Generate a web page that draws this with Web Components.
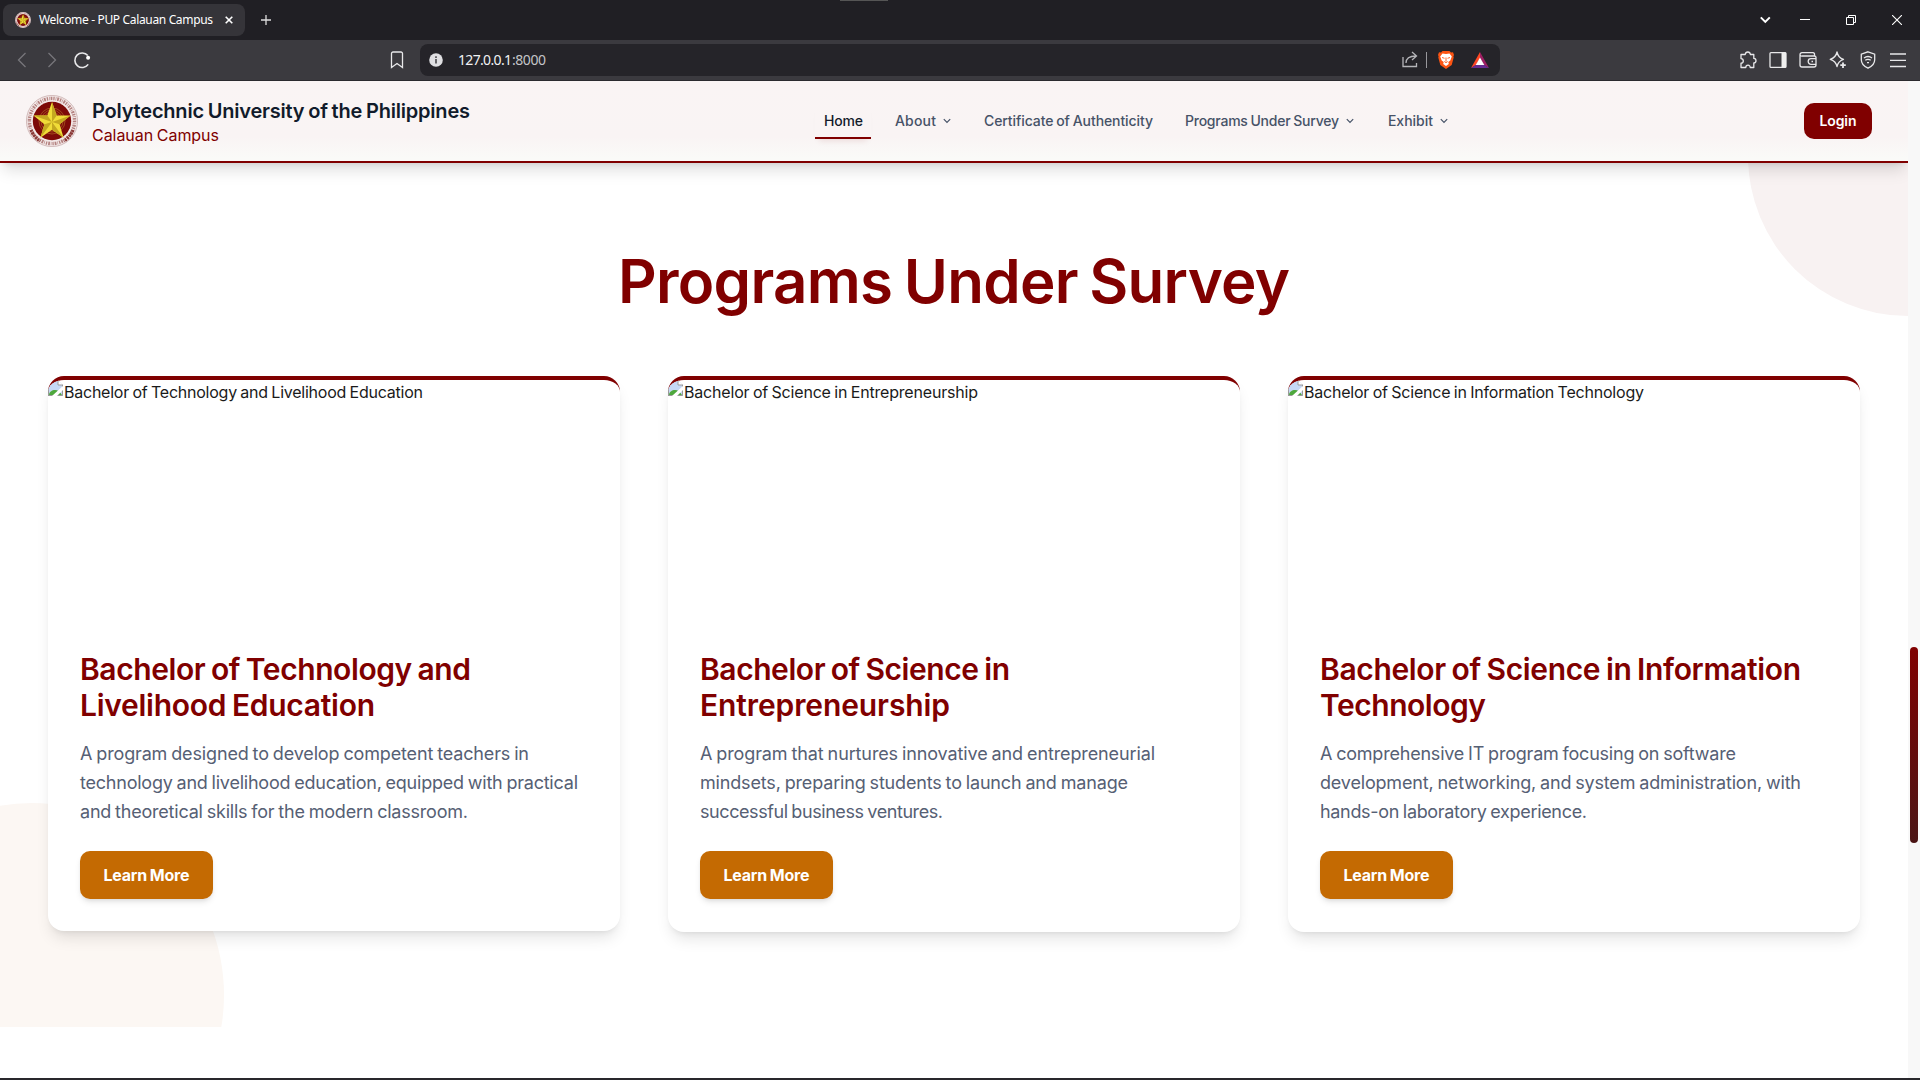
<!DOCTYPE html>
<html lang="en">
<head>
<meta charset="utf-8">
<title>Welcome - PUP Calauan Campus</title>
<style>
html,body{margin:0;height:100%;overflow:hidden;background:#fff}
body{font-family:Inter,"Liberation Sans",sans-serif}
</style>
</head>
<body>
<app-window></app-window>
<script>
const define=(name,html,init)=>{
  const t=document.createElement('template');t.innerHTML=html;
  customElements.define(name,class extends HTMLElement{
    connectedCallback(){
      if(this.shadowRoot)return;
      this.attachShadow({mode:'open'}).append(t.content.cloneNode(true));
      if(init)init.call(this,this.shadowRoot);
    }
  });
};

/* A single line of text, tracked so that it fills the width in "w". */
define('fit-line',`<style>:host{display:block;white-space:nowrap}span{display:inline-block;word-spacing:var(--word,-.05em)}</style><span><slot></slot></span>`,
function(root){
  const s=root.querySelector('span'),n=this.textContent.length,w=+this.getAttribute('w');
  s.style.letterSpacing='0px';
  const natural=s.getBoundingClientRect().width;
  const ls=(w-natural)/(n-1);
  s.style.letterSpacing=ls.toFixed(4)+'px';
  s.style.marginRight=(-ls).toFixed(4)+'px';
});

define('pup-seal',`<style>:host{display:block}svg{display:block;width:100%;height:100%}</style>
<svg viewBox="0 0 52 52"><circle cx="26" cy="26" r="25.600" fill="#f3e9e8" stroke="#b99" stroke-width=".6"/>
<circle cx="26" cy="26" r="22.600" fill="none" stroke="#b58482" stroke-width="3.400" stroke-dasharray="1.300 1.100 .6 .9 1.800 1"/>
<path d="M5 35a23 23 0 0 0 9 11M47 35a23 23 0 0 1-9 11" fill="none" stroke="#8b3a38" stroke-width="3.200" stroke-dasharray="2 .8"/>
<circle cx="26" cy="26" r="19.200" fill="#7d0a08"/>
<g fill="none" stroke="#b5722c" stroke-width=".6"><circle cx="26" cy="26" r="13"/><circle cx="26" cy="26" r="11"/><circle cx="26" cy="26" r="9"/></g>
<path d="M26 7l4.700 13.400 13.900.2-11 8.600 4 13.600L26 34.800l-11.600 8 4-13.600-11-8.600 13.900-.2z" fill="#f0dc38"/>
<path d="M26 7v20l4.700-6.600zM44.600 20.600L26 27l7.600 2.200zM37.600 42.800L26 27v7.800zM14.400 42.800L26 27l-7.600 2.200zM7.400 20.600L26 27l-4.700-6.400z" fill="#c4a820"/></svg>`);

define('tab-strip',`<style>
:host{display:flex;align-items:center;height:40px;background:#201f24;color:#fff;box-sizing:border-box;padding-left:3px;position:relative}
.tab{display:flex;align-items:center;width:242px;height:32px;border-radius:8px;background:#353439;font:12px/16px "Noto Sans","Open Sans",sans-serif;box-sizing:border-box;padding-left:12px;--word:0}
pup-seal{width:16px;height:16px}fit-line{margin-left:8px;width:174px}
.x{margin-left:12px}.plus{margin-left:15px}.gap{flex:1}svg{display:block;fill:none;stroke:#fff}
.handle{position:absolute;left:840px;top:0;width:48px;height:1px;background:#555}
.win{display:flex;align-items:center;padding-right:18px}
</style><div class="handle"></div>
<div class="tab"><pup-seal></pup-seal><fit-line w="174">Welcome - PUP Calauan Campus</fit-line>
<svg class="x" width="8" height="8" stroke-width="1.600"><path d="M.7.7l6.600 6.600M7.300.7L.7 7.300"/></svg></div>
<svg class="plus" width="12" height="12" style="stroke:#ddd;stroke-width:1.300"><path d="M6 1v10M1 6h10"/></svg>
<div class="gap"></div>
<div class="win">
<svg width="11" height="8" stroke-width="2" style="margin-right:29px"><path d="M.8 1.400L5.300 5.900l4.500-4.500"/></svg>
<svg width="10" height="10" style="margin-right:36px"><path d="M0 4.500h10"/></svg>
<svg width="10" height="10" style="margin-right:36px"><path d="M.5 2.500h7v7h-7zM2.500 2.500v-2h7v7h-2"/></svg>
<svg width="10" height="10" stroke-width="1.100"><path d="M0 0l10 10M10 0L0 10"/></svg></div>`);

define('tool-bar',`<style>
:host{display:flex;align-items:center;height:41px;background:#3b3a3f;border-bottom:1px solid #2b2a2e;box-sizing:border-box}
svg{display:block;fill:none;stroke:#e8e8ea;stroke-width:1.300}
.nav{display:flex;align-items:center;width:420px;box-sizing:border-box;padding-left:17px}
.url{display:flex;align-items:center;width:1080px;height:32px;border-radius:8px;background:#252429;box-sizing:border-box;padding:0 11px 0 9px}
.addr{display:flex;margin-left:15px;font:14px/20px "Noto Sans","Open Sans",sans-serif;color:#f1f1f3}
.addr .p{color:#c4c4c8}
.gap{flex:1}.tools{display:flex;flex:1;justify-content:flex-end;gap:12px;padding-right:13px}
</style>
<div class="nav">
<svg width="10" height="16" style="stroke:#77767b"><path d="M8.500 1L1.500 8l7 7"/></svg>
<svg width="10" height="16" style="stroke:#77767b;margin-left:20px"><path d="M1.500 1l7 7-7 7"/></svg>
<svg width="18" height="18" style="margin-left:16px;stroke-width:1.600"><path d="M15.200 13.400A7.300 7.300 0 1 1 14.800 4.600"/><circle cx="15.100" cy="6.800" r="2" fill="#fff" stroke="none"/></svg>
<svg width="14" height="18" style="margin-left:299px"><path d="M1.500 2.500a1.500 1.500 0 0 1 1.500-1.500h8a1.500 1.500 0 0 1 1.500 1.500v14l-5.500-4-5.500 4z"/></svg></div>
<div class="url"><svg width="14" height="14"><circle cx="7" cy="7" r="6.800" fill="#dfdfe2" stroke="none"/><path d="M7 6v4.500M7 3.300v1.600" style="stroke:#252429"/></svg>
<div class="addr"><fit-line w="54">127.0.0.1</fit-line><fit-line class="p" w="34">:8000</fit-line></div><div class="gap"></div>
<svg width="16" height="18" style="stroke:#b5b5b9;margin-right:8px"><path d="M1 6v9.500h13.500V12M4 12c0-4.500 3-7 10-7M10 1l4.500 4L10 9"/></svg>
<svg width="1" height="16" style="background:#98979c;margin-right:11px"></svg>
<svg width="16" height="18" style="margin-right:17px"><path d="M4.500 0h7l1.500 1.500 2-.2L16 4l-.6 1.300.3 1.200-2 7.500L8 18l-5.700-4-2-7.500.3-1.200L0 4l1-2.700 2 .2z" fill="#fb5413" stroke="none"/><path d="M4.500 2.500L8 3l3.500-.5 2.300 3-1.500 4-2 1.500.5 2L8 15l-2.800-2 .5-2-2-1.500-1.500-4z" fill="#fff" stroke="none"/><path d="M4 6.500l2.500.8M12 6.500l-2.500.8M8 6.500v4M6.300 10.500l1.700 1.200 1.700-1.200" style="stroke:#fb5413;stroke-width:.9"/></svg>
<svg width="18" height="16"><g stroke="none"><path d="M9 0L0 16l5-3 4-7z" fill="#ff4724"/><path d="M9 0l9 16-5-3-4-7z" fill="#9e1f63"/><path d="M0 16l5-3.200h8L18 16z" fill="#662d91"/><path d="M9 5.500l4.300 7.500H4.700z" fill="#fff"/></g></svg>
</div>
<div class="tools">
<svg width="18" height="18"><path d="M2 3.500h4.200c.2-1.400 1.200-2.500 2.600-2.500s2.400 1.100 2.600 2.500h3.400v3.900c1.400.1 2.200 1.100 2.200 2.300s-.8 2.200-2.200 2.300v4.500h-3.600c0-1.400-.8-2.300-2.200-2.300s-2.200.9-2.200 2.300H2v-4.300c1.400-.1 2.300-1 2.300-2.300S3.400 7.700 2 7.600z" stroke-linejoin="round"/></svg>
<svg width="18" height="18"><rect x="1" y="1.600" width="16" height="14.800" rx="1"/><path d="M12.500 1.500H17v15h-4.500z" fill="#eee" stroke="none"/></svg>
<svg width="18" height="18"><path d="M15.500 5V3.500A1.500 1.500 0 0 0 14 1.700H3a2 2 0 0 0-2 2V14a2 2 0 0 0 2 2h12a2 2 0 0 0 2-2V6.500A1.500 1.500 0 0 0 15.500 5H3A1.700 1.700 0 0 1 1 3.500M17 7.700h-5a2.800 2.800 0 0 0 0 5.600h5M12.500 10.500h1.500"/></svg>
<svg width="18" height="18"><path d="M8 1c.8 4 2.400 6.200 6.500 7.300C11 9.400 8.800 11.500 8 15.700 7.200 11.500 5 9.400 1.200 8.300 5 7.200 7.200 5 8 1z" stroke-linejoin="round"/><path d="M14 11.500v5.500M11.300 14.200h5.500" stroke-width="1.800"/></svg>
<svg width="18" height="18"><path d="M9 .8l6.700 2.300v5.700c0 4-2.700 6.600-6.700 8.400-4-1.800-6.700-4.400-6.700-8.400V3.100zM5 7c2.400-1.800 5.600-1.800 8 0M6.300 9.300c1.700-1.200 3.700-1.200 5.400 0M8 11.600h2"/></svg>
<svg width="18" height="18"><path d="M1 3h16M1 9.300h16M1 15.500h16"/></svg></div>`);

define('nav-item',`<style>
:host{display:flex;align-items:center;height:37px;font-weight:500;font-size:14px;line-height:20px;color:#465267;box-sizing:border-box}
:host([active]){height:36px;color:#131b2b;padding:2px 8px 0 9px;border-bottom:2px solid #800000;box-shadow:0 6px 6px -4px rgba(128,0,0,.1)}
svg{display:none;margin-left:7px}:host([menu]) svg{display:block}
</style><slot></slot><svg width="8" height="6" fill="none" stroke="currentColor" stroke-width="1.200"><path d="M.8 1.200L4 4.500l3.200-3.300"/></svg>`);

define('site-header',`<style>
:host{display:flex;align-items:center;height:82px;box-sizing:border-box;border-bottom:2px solid #800000;background:linear-gradient(#faf4f4 0,#f9f4f4 70%,#fafaf8 96%);box-shadow:0 10px 15px -3px rgba(0,0,0,.13),0 4px 6px -4px rgba(0,0,0,.12);position:relative;padding-left:26px}
pup-seal{width:52px;height:52px}
.brand{margin-left:14px;width:723px;padding-top:3px}
.a{font-weight:580;font-size:20px;line-height:25px;color:#111b2b}.b{font-size:16px;line-height:22px;color:#800000}
nav{display:flex;flex:1;align-items:center;height:80px}
.login{width:68px;height:36px;margin-right:36px;border-radius:10px;background:#800000;color:#fff;font-weight:600;font-size:14px;line-height:36px;display:flex;justify-content:center}
</style><pup-seal></pup-seal>
<div class="brand"><fit-line class="a" w="378">Polytechnic University of the Philippines</fit-line><fit-line class="b" w="127">Calauan Campus</fit-line></div>
<nav><nav-item active><fit-line w="39">Home</fit-line></nav-item>
<nav-item menu style="margin-left:24px"><fit-line w="41">About</fit-line></nav-item>
<nav-item style="margin-left:33px"><fit-line w="169">Certificate of Authenticity</fit-line></nav-item>
<nav-item menu style="margin-left:32px"><fit-line w="154">Programs Under Survey</fit-line></nav-item>
<nav-item menu style="margin-left:34px"><fit-line w="45">Exhibit</fit-line></nav-item></nav>
<div class="login"><fit-line w="37">Login</fit-line></div>`);

define('program-card',`<style>
:host{display:flex;flex-direction:column;width:572px;height:556px;box-sizing:border-box;border-top:4px solid #800000;border-radius:16px;background:#fff;overflow:hidden;box-shadow:0 10px 15px -3px rgba(0,0,0,.1),0 4px 6px -4px rgba(0,0,0,.1)}
:host([short]){height:555px}
.img{display:flex;height:240px;font-size:16px;line-height:25px;color:#1a1a1a;font-weight:370}
.img svg{display:block;flex:none}
.body{padding:31px 32px 0}
.h{font-weight:580;font-size:30px;line-height:36px;color:#800000}
.p{margin-top:15.600px;font-size:18px;line-height:29.250px;color:#566074;font-weight:370}
button{all:unset;display:flex;justify-content:center;align-items:center;margin-top:24.650px;width:133px;height:48px;border-radius:10px;background:#c46a02;color:#fff;font-weight:700;font-size:16px;box-shadow:0 4px 6px -1px rgba(0,0,0,.1),0 2px 4px -2px rgba(0,0,0,.1)}
</style><div class="img"><svg width="16" height="16"><path d="M0 0h10l5 5v11H0z" fill="#c6d7f5"/><path d="M10 0v5h5" fill="#fff" stroke="#9a9a9a"/><path d="M0 .5h10.500M.5 0v16M0 15.500h14.500V5" fill="none" stroke="#9a9a9a"/><path d="M1 15c0-3 3-5 6-5 3 0 5 2 7 5z" fill="#4ea83c"/><path d="M4 16L16 5v4l-7 7z" fill="#fff"/></svg><slot name="alt"></slot></div>
<div class="body"><div class="h"><slot name="title"></slot></div><div class="p"><slot></slot></div>
<button><fit-line w="86">Learn More</fit-line></button></div>`);

define('programs-section',`<style>
:host{display:block;height:864px;position:relative;overflow:hidden}
.c1,.c2{position:absolute;border-radius:50%}
.c1{width:320px;height:320px;left:1748px;top:-167px;background:#f8f2f2}
.c2{width:384px;height:384px;left:-160px;top:640px;background:#fcf7f3}
.t{position:relative;display:flex;justify-content:center;padding-top:82px;font-weight:580;font-size:60px;line-height:72px;color:#800000}
.cards{position:relative;display:flex;gap:48px;padding:59px 48px 0}
</style><div class="c1"></div><div class="c2"></div>
<div class="t"><fit-line w="672">Programs Under Survey</fit-line></div>
<div class="cards">
<program-card short><fit-line slot="alt" w="359">Bachelor of Technology and Livelihood Education</fit-line>
<fit-line slot="title" w="391">Bachelor of Technology and</fit-line><fit-line slot="title" w="295">Livelihood Education</fit-line>
<fit-line w="449">A program designed to develop competent teachers in</fit-line><fit-line w="498">technology and livelihood education, equipped with practical</fit-line><fit-line w="388">and theoretical skills for the modern classroom.</fit-line></program-card>
<program-card><fit-line slot="alt" w="294">Bachelor of Science in Entrepreneurship</fit-line>
<fit-line slot="title" w="310">Bachelor of Science in</fit-line><fit-line slot="title" w="250">Entrepreneurship</fit-line>
<fit-line w="455">A program that nurtures innovative and entrepreneurial</fit-line><fit-line w="428">mindsets, preparing students to launch and manage</fit-line><fit-line w="243">successful business ventures.</fit-line></program-card>
<program-card><fit-line slot="alt" w="340">Bachelor of Science in Information Technology</fit-line>
<fit-line slot="title" w="481">Bachelor of Science in Information</fit-line><fit-line slot="title" w="166">Technology</fit-line>
<fit-line w="416">A comprehensive IT program focusing on software</fit-line><fit-line w="481">development, networking, and system administration, with</fit-line><fit-line w="267">hands-on laboratory experience.</fit-line></program-card>
</div>`);

define('scroll-track',`<style>:host{display:block;width:12px;background:#f8f8f8}div{margin:566px 2px 0;height:196px;border-radius:4px;background:linear-gradient(#800000,#4a1414)}</style><div></div>`);

define('app-window',`<style>
:host{display:flex;flex-direction:column;width:1920px;height:1080px;overflow:hidden}
.view{display:flex;flex:1}.page{width:1908px;overflow:hidden}
site-header{z-index:1}
.task{height:2px;background:#29282c}
</style><tab-strip></tab-strip><tool-bar></tool-bar>
<div class="view"><div class="page"><site-header></site-header><programs-section></programs-section></div><scroll-track></scroll-track></div><div class="task"></div>`);
</script>
</body>
</html>
